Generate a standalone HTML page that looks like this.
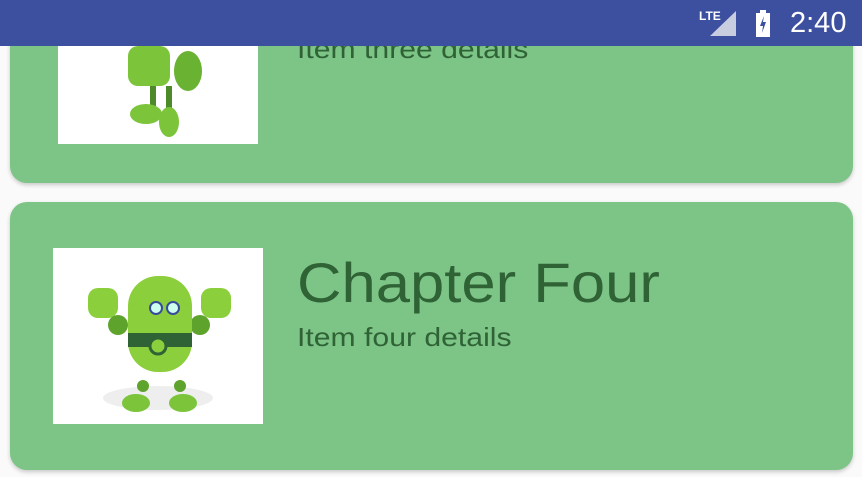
<!DOCTYPE html>
<html><head><style>
body{margin:0;width:862px;height:477px;background:#fafafa;position:relative;overflow:hidden;font-family:"Liberation Sans",sans-serif}
.card{position:absolute;left:10px;width:843px;background:#7dc487;border-radius:17px;box-shadow:0 2px 4px rgba(0,0,0,.2)}
.img{position:absolute;background:#fff}
.t{position:absolute;color:#2f6336;white-space:nowrap;transform-origin:0 0}
.bar{position:absolute;left:0;top:0;width:862px;height:46px;background:#3d4f9f}
</style></head><body>
<div class="card" style="top:-30px;height:213px"></div>
<div class="img" style="left:58px;top:46px;width:200px;height:98px">
<svg width="200" height="98"><g fill="#7cc43a">
<rect x="70" y="0" width="42" height="40" rx="10"/>
<ellipse cx="130" cy="25" rx="14" ry="20" fill="#6ab232"/>
<rect x="92" y="40" width="6" height="22" fill="#4c8a2a"/><rect x="108" y="40" width="6" height="22" fill="#4c8a2a"/>
<ellipse cx="88" cy="68" rx="16" ry="10"/><ellipse cx="111" cy="76" rx="10" ry="15"/></g></svg>
</div>
<div class="t" style="left:297px;top:34px;font-size:26px;transform:scaleX(1.16)">Item three details</div>
<div class="card" style="top:202px;height:268px"></div>
<div class="img" style="left:53px;top:248px;width:210px;height:176px">
<svg width="210" height="176">
<ellipse cx="105" cy="150" rx="55" ry="12" fill="#eee"/>
<rect x="35" y="40" width="30" height="30" rx="10" fill="#8ccf3c"/><rect x="148" y="40" width="30" height="30" rx="10" fill="#8ccf3c"/>
<circle cx="65" cy="77" r="10" fill="#5ea32c"/><circle cx="147" cy="77" r="10" fill="#5ea32c"/>
<rect x="75" y="28" width="64" height="96" rx="30" fill="#8ccf3c"/>
<rect x="75" y="85" width="64" height="14" fill="#2f6336"/>
<circle cx="103" cy="60" r="6" fill="#cfe" stroke="#3a4a9a" stroke-width="2"/><circle cx="120" cy="60" r="6" fill="#cfe" stroke="#3a4a9a" stroke-width="2"/>
<circle cx="105" cy="98" r="8" fill="#8ccf3c" stroke="#2f6336" stroke-width="3"/>
<circle cx="90" cy="138" r="6" fill="#5ea32c"/><circle cx="127" cy="138" r="6" fill="#5ea32c"/>
<ellipse cx="83" cy="155" rx="14" ry="9" fill="#7cc43a"/><ellipse cx="130" cy="155" rx="14" ry="9" fill="#7cc43a"/>
</svg></div>
<div class="t" style="left:297px;top:250px;font-size:56px;transform:scaleX(1.1)">Chapter Four</div>
<div class="t" style="left:297px;top:322px;font-size:26px;transform:scaleX(1.16)">Item four details</div>
<div class="bar">
<div style="position:absolute;left:699px;top:9px;color:#fff;font-size:12px;font-weight:bold">LTE</div>
<svg style="position:absolute;left:708px;top:11px" width="28" height="26"><polygon points="28,0 28,25 2,25" fill="#c8cde0"/></svg>
<svg style="position:absolute;left:756px;top:10px" width="14" height="27"><rect x="0" y="3" width="14" height="24" fill="#fff"/><rect x="4" y="0" width="6" height="3" fill="#fff"/><path d="M8 6 L4 16 H7 L6 23 L10 12 H7 Z" fill="#3d4f9f"/></svg>
<div style="position:absolute;left:790px;top:7px;color:#fff;font-size:29px">2:40</div>
</div>
</body></html>
